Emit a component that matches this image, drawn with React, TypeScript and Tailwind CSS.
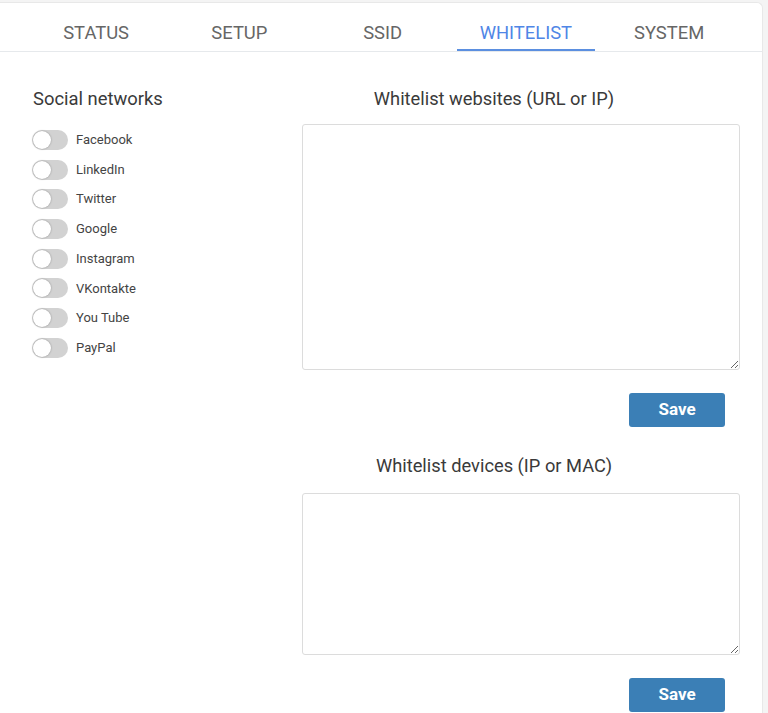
const tabs = ["STATUS", "SETUP", "SSID", "WHITELIST", "SYSTEM"];
const networks = ["Facebook", "LinkedIn", "Twitter", "Google", "Instagram", "VKontakte", "You Tube", "PayPal"];

function Toggle() {
  return (
    <span className="relative inline-block w-[36px] h-[20px] rounded-full bg-[#d2d2d2]">
      <span className="absolute left-[1px] top-[1px] w-[18px] h-[18px] rounded-full bg-white shadow-[0_0_2px_rgba(0,0,0,0.35)]" />
    </span>
  );
}

function WhitelistBlock({ title, box }: { title: string; box: string }) {
  return (
    <div className="flex flex-col">
      <h2 className="text-center pr-[54px] text-[18.3px] leading-6 text-[#3a3a3a]">{title}</h2>
      <textarea className={`w-full ${box} border border-[#dcdcdc] rounded-[3px] outline-none p-2 text-sm`} />
      <div className="flex justify-end pr-[15px] mt-[23px]">
        <button className="w-[96px] h-[34px] rounded-[3px] bg-[#3b7fb6] text-white font-bold text-[17px]">
          Save
        </button>
      </div>
    </div>
  );
}

export default function App() {
  return (
    <div className="min-h-screen bg-[#f4f4f4] pt-[2px] font-['Roboto',sans-serif]">
      <div className="w-[763px] min-h-[711px] bg-white border-r border-t border-[#e8e8e8] rounded-tr-[6px]">
        {/* Tabs */}
        <nav className="flex pl-[24.5px] border-b border-[#e6e9ec]">
          {tabs.map((t) => (
            <div key={t} className="w-[143.25px] px-[2.6px]">
              <div
                className={`h-[48px] flex items-end justify-center pb-[6px] border-b-2 text-[18.4px] leading-5 ${
                  t === "WHITELIST" ? "border-[#5b8fe0] text-[#4f86e6]" : "border-transparent text-[#666]"
                }`}
              >
                {t}
              </div>
            </div>
          ))}
        </nav>

        <main className="flex pt-[35px]">
          {/* Social networks */}
          <section className="w-[302px] pl-[32px]">
            <h2 className="pl-[1px] text-[18.4px] leading-6 text-[#3a3a3a]">Social networks</h2>
            <ul className="mt-[14px]">
              {networks.map((n) => (
                <li key={n} className="h-[29.7px] flex items-center gap-[8px]">
                  <Toggle />
                  <span className="text-[13px] text-[#444]">{n}</span>
                </li>
              ))}
            </ul>
          </section>

          {/* Whitelists */}
          <section className="w-[438px] flex flex-col gap-[27px]">
            <WhitelistBlock title="Whitelist websites (URL or IP)" box="mt-[13px] h-[246px]" />
            <WhitelistBlock title="Whitelist devices (IP or MAC)" box="mt-[15px] h-[162px]" />
          </section>
        </main>
      </div>
    </div>
  );
}
